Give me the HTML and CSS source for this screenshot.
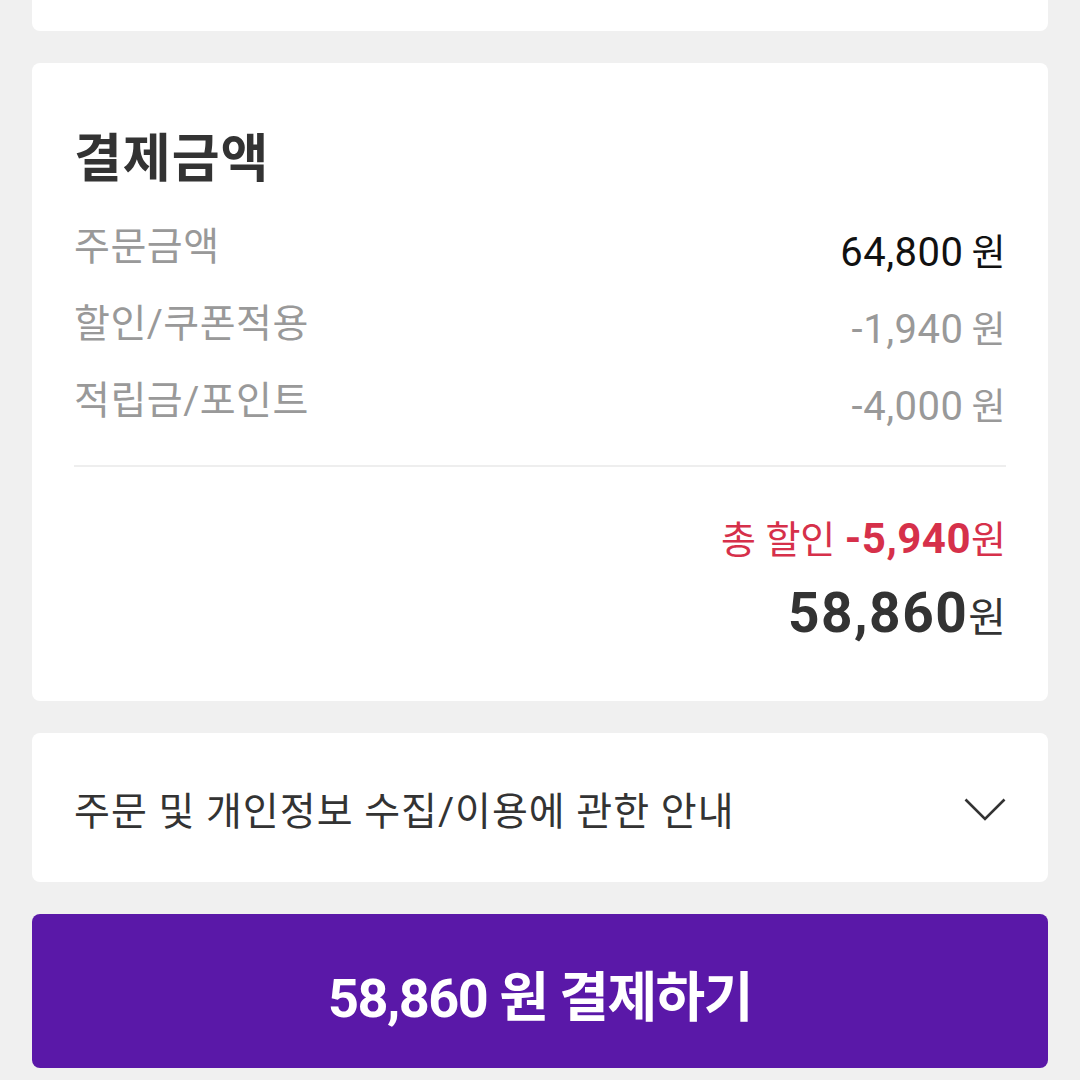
FILE: index.html
```html
<!doctype html>
<html>

<head>
    <meta charset="UTF-8">
    <title>결제금액</title>
    <link rel="stylesheet" href="styles.css">
</head>

<body>
    <div class="page">
        <div class="card card-prev"></div>

        <div class="card pay">
            <h2 class="pay-title">결제금액</h2>
            <ul class="pay-list">
                <li class="pay-row">
                    <span class="pay-label">주문금액</span>
                    <span class="pay-value strong">64,800<em>원</em></span>
                </li>
                <li class="pay-row">
                    <span class="pay-label">할인/쿠폰적용</span>
                    <span class="pay-value">-1,940<em>원</em></span>
                </li>
                <li class="pay-row">
                    <span class="pay-label">적립금/포인트</span>
                    <span class="pay-value">-4,000<em>원</em></span>
                </li>
            </ul>
            <div class="pay-total">
                <div class="discount">총 할인 <b>-5,940</b>원</div>
                <div class="total"><b>58,860</b>원</div>
            </div>
        </div>

        <div class="card notice">
            <span>주문 및 개인정보 수집/이용에 관한 안내</span>
            <svg class="chevron" width="42" height="24" viewBox="0 0 42 24">
                <path d="M1.5 2.5 L21 22 L40.5 2.5" fill="none" stroke="#333" stroke-width="2.6" />
            </svg>
        </div>

        <button class="pay-btn">58,860 원 결제하기</button>
    </div>
</body>

</html>
```

FILE: styles.css
```css
html {
    --bg: #f0f0f0;
    --text: #333;
    --gray: #999;
    --red: #d6304a;
    --purple: #5a18a8;
}
body {
    margin: 0;
    background-color: var(--bg);
    font-family: Roboto, "Noto Sans CJK KR", sans-serif;
    color: var(--text);
}
.page {
    display: flex;
    flex-direction: column;
    gap: 32px;
    padding: 0 32px;
}
.card {
    background-color: #fff;
    border-radius: 8px;
}
.card-prev {
    height: 31px;
    border-radius: 0 0 8px 8px;
}

/* 결제금액 */
.pay {
    height: 638px;
    box-sizing: border-box;
    padding: 67px 42px 0 42px;
}
.pay-title {
    margin: 0;
    font-size: 52px;
    line-height: 60px;
    font-weight: 700;
    color: #333;
    letter-spacing: 1px;
}
.pay-list {
    list-style: none;
    margin: 19px 0 0 0;
    padding: 0 0 25px 0;
    border-bottom: 2px solid #eee;
}
.pay-row {
    display: flex;
    justify-content: space-between;
    align-items: flex-start;
    height: 77px;
    line-height: 77px;
}
.pay-label {
    font-size: 39px;
    color: var(--gray);
    letter-spacing: 0.5px;
}
.pay-value {
    padding-top: 5px;
    font-size: 40px;
    color: var(--gray);
    letter-spacing: 0.5px;
}
.pay-value em {
    font-style: normal;
    font-size: 37px;
    margin-left: 8px;
}
.pay-value.strong {
    color: #111;
}
.pay-total {
    text-align: right;
    padding-top: 50px;
}
.discount {
    font-size: 38px;
    color: var(--red);
    line-height: 44px;
}
.discount b {
    font-size: 42px;
    letter-spacing: 0.5px;
}
.total {
    font-size: 41px;
    line-height: 70px;
    margin-top: 16px;
}
.total b {
    font-size: 55px;
    letter-spacing: 1.5px;
}

/* 안내 */
.notice {
    height: 149px;
    display: flex;
    align-items: center;
    justify-content: space-between;
    padding: 0 42px;
    font-size: 39px;
    letter-spacing: 1px;
    color: #333;
}
.chevron {
    margin-top: 2px;
}

.pay-btn {
    height: 154px;
    padding-top: 6px;
    border: none;
    border-radius: 8px;
    background-color: var(--purple);
    color: #fff;
    font-family: inherit;
    font-size: 54px;
    font-weight: 700;
    letter-spacing: -1.5px;
}
```
